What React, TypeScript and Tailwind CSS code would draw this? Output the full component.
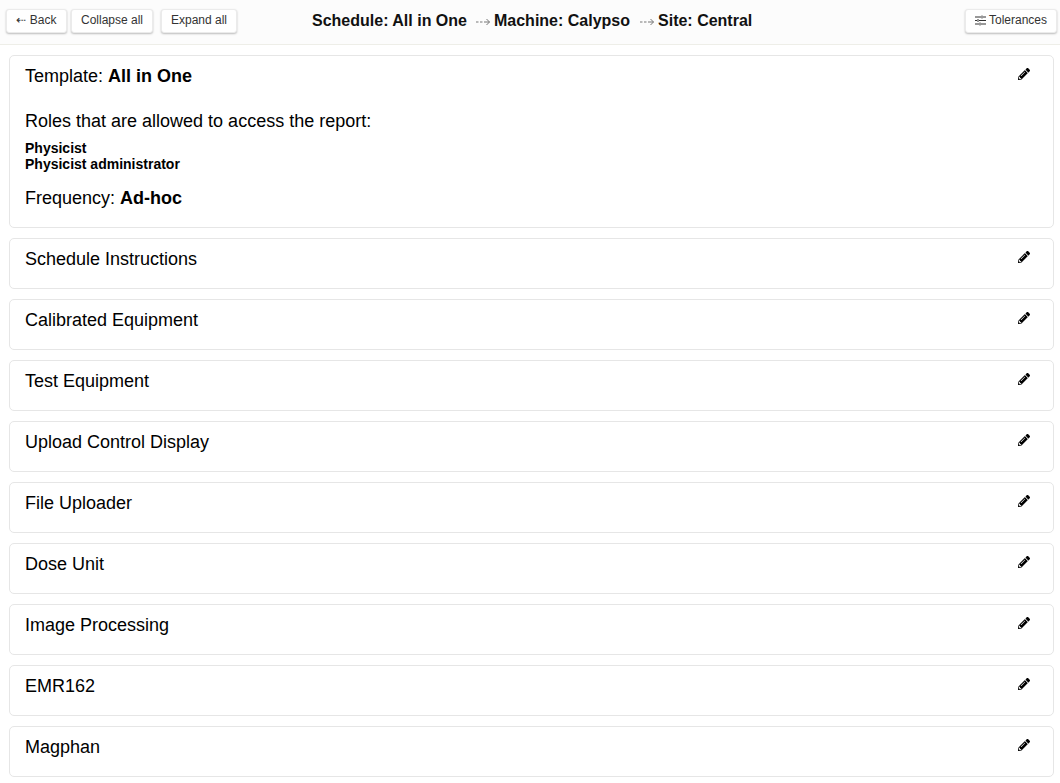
import { FaPencilAlt } from "react-icons/fa";

const sections = [
  "Schedule Instructions",
  "Calibrated Equipment",
  "Test Equipment",
  "Upload Control Display",
  "File Uploader",
  "Dose Unit",
  "Image Processing",
  "EMR162",
  "Magphan",
];

const btn =
  "h-[24px] flex items-center justify-center rounded-[3px] border border-[#ebebeb] bg-white pb-[2px] text-[12px] text-[#333] shadow-[0_1px_2px_rgba(0,0,0,0.25)]";

function Pencil() {
  return <FaPencilAlt className="mt-[3px] mr-[23px] h-[12px] w-[12px] shrink-0 text-black" />;
}

// dashed arrow used between the breadcrumb parts
function DashArrow({ className }: { className: string }) {
  return (
    <svg width="14" height="8" viewBox="0 0 14 8" fill="none" stroke="#777" strokeWidth="1" className={`mt-[2px] mr-[4px] shrink-0 ${className}`}>
      <path d="M0 4h2.5M4 4h2.5M8 4h5.5" />
      <path d="M10.5 1 13.5 4l-3 3" />
    </svg>
  );
}

function SlidersIcon() {
  return (
    <svg width="11" height="11" viewBox="0 0 11 11" fill="none" stroke="#333" strokeWidth="1" className="shrink-0">
      <path d="M0 2h6M8 2h3M0 5.5h2M4 5.5h7M0 9h4M6 9h5" />
      <path d="M7 .5v3M3 4v3M5 7.5v3" />
    </svg>
  );
}

export default function App() {
  return (
    <div className="min-h-screen bg-white font-['Liberation_Sans',Arial,sans-serif] text-black">
      {/* Top bar */}
      <header className="flex h-[45px] items-start border-b border-[#eeeee8] bg-[#fcfcfc] pt-[9px] pr-[3px] pl-[6px]">
        <button className={`${btn} w-[61px]`}>⇠ Back</button>
        <button className={`${btn} ml-[4px] w-[82px]`}>Collapse all</button>
        <button className={`${btn} ml-[8px] w-[76px]`}>Expand all</button>
        <div className="mt-[2px] ml-[75px] flex items-center text-[16px] leading-[20px] font-bold whitespace-pre text-[#111]">
          <span>Schedule: All in One</span>
          <DashArrow className="ml-[9px]" />
          <span>Machine: Calypso</span>
          <DashArrow className="ml-[10px]" />
          <span>Site: Central</span>
        </div>
        <button className={`${btn} ml-auto w-[92px] gap-[3px]`}>
          <SlidersIcon />
          Tolerances
        </button>
      </header>

      <main className="flex flex-col gap-[10px] pt-[10px] pr-[6px] pl-[9px]">
        {/* Template card */}
        <section className="flex h-[173px] items-start justify-between rounded-[5px] border border-[#e6e6e6] pt-[9px] pl-[15px]">
          <div>
            <h2 className="text-[18px] leading-[22px]">
              Template: <b>All in One</b>
            </h2>
            <p className="mt-[23px] text-[18px] leading-[22px]">Roles that are allowed to access the report:</p>
            <ul className="mt-[8px] text-[14px] leading-[16px] font-bold">
              <li>Physicist</li>
              <li>Physicist administrator</li>
            </ul>
            <p className="mt-[15px] text-[18px] leading-[22px]">
              Frequency: <b>Ad-hoc</b>
            </p>
          </div>
          <Pencil />
        </section>

        {sections.map((name) => (
          <section
            key={name}
            className="flex h-[51px] items-start justify-between rounded-[5px] border border-[#e6e6e6] pt-[9px] pl-[15px]"
          >
            <h2 className="text-[18px] leading-[22px]">{name}</h2>
            <Pencil />
          </section>
        ))}
      </main>
    </div>
  );
}
